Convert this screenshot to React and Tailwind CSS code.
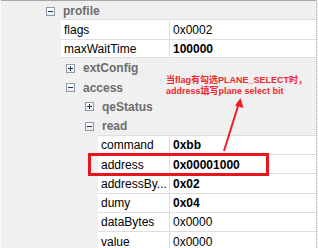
import React from "react";

const rows = [
  { t: "cat", L: 0, open: true, name: "profile" },
  { t: "prop", L: 0, name: "flags", value: "0x0002" },
  { t: "prop", L: 0, name: "maxWaitTime", value: "100000", bold: true, last: true },
  { t: "cat", L: 1, open: false, name: "extConfig" },
  { t: "cat", L: 1, open: true, name: "access" },
  { t: "cat", L: 2, open: false, name: "qeStatus" },
  { t: "cat", L: 2, open: true, name: "read" },
  { t: "prop", L: 2, name: "command", value: "0xbb", bold: true },
  { t: "prop", L: 2, name: "address", value: "0x00001000", bold: true },
  { t: "prop", L: 2, name: "addressBy...", value: "0x02", bold: true },
  { t: "prop", L: 2, name: "dumy", value: "0x04", bold: true },
  { t: "prop", L: 2, name: "dataBytes", value: "0x0000" },
  { t: "prop", L: 2, name: "value", value: "0x0000" },
];

const catPad = { 0: "pl-[45px]", 1: "pl-[65px]", 2: "pl-[84px]" };
const propIndent = { 0: "w-[60px]", 2: "w-[97px]" };
const nameW = { 0: "w-[108px]", 2: "w-[71px]" };

function Box({ open }) {
  return (
    <div className="relative w-[9px] h-[9px] border border-[#8f9aa6] bg-gradient-to-b from-white to-[#e8ecf0] shrink-0">
      <div className="absolute left-[1px] top-[3px] w-[5px] h-px bg-[#1f3557]" />
      {!open && <div className="absolute left-[3px] top-[1px] w-px h-[5px] bg-[#1f3557]" />}
    </div>
  );
}

export default function App() {
  return (
    <div className="relative w-[318px] h-[248px] overflow-hidden bg-[#f0f0f0] flex font-['Liberation_Sans','Noto_Sans_CJK_SC',sans-serif] text-[12px] leading-none">
      <div className="w-[316px] flex flex-col border-l border-[#fbfbfb]">
        {rows.map((r, i) =>
          r.t === "cat" ? (
            <div
              key={i}
              className={`h-[19.25px] shrink-0 flex items-center gap-[8px] pt-[2px] ${catPad[r.L]} ${i === 0 ? "border-t border-[#a8a8a8]" : ""}`}
            >
              <Box open={r.open} />
              <span className="font-bold text-[#6d6d6d]">{r.name}</span>
            </div>
          ) : (
            <div key={i} className="h-[19.25px] shrink-0 flex">
              <div className={`${propIndent[r.L]} shrink-0`} />
              <div
                className={`flex-1 flex bg-white border-t border-[#dedede] ${r.last ? "border-b" : ""}`}
              >
                <div className={`${nameW[r.L]} shrink-0 flex items-center pl-[3px] pt-[1px] overflow-hidden whitespace-nowrap text-black`}>
                  {r.name}
                </div>
                <div className="w-px bg-[#dedede] shrink-0" />
                <div className={`flex-1 flex items-center pl-[3px] pt-[1px] text-black ${r.bold ? "font-bold" : ""}`}>
                  {r.value}
                </div>
              </div>
            </div>
          )
        )}
      </div>
      <div className="w-px h-full bg-[#cfcfcf]" />
      <div className="flex-1 h-full bg-[repeating-conic-gradient(#e2e2e2_0_25%,#ffffff_0_50%)] bg-[length:2px_2px]" />

      {/* annotation */}
      <div className="absolute left-[166px] top-[75px] text-[9px] leading-[11px] font-bold text-[#f0262c] whitespace-nowrap">
        <div>当flag有勾选PLANE_SELECT时，</div>
        <div>address填写plane select bit</div>
      </div>
      <svg className="absolute left-0 top-0" width="318" height="248" viewBox="0 0 318 248">
        <line x1="224" y1="151" x2="238" y2="106" stroke="#ee1c25" strokeWidth="2" />
        <polygon points="240.5,98 243.5,108 235,105.5" fill="#ee1c25" />
      </svg>
      <div className="absolute left-[88px] top-[153px] w-[181px] h-[23px] border-[3px] border-[#e8141e]" />
    </div>
  );
}
